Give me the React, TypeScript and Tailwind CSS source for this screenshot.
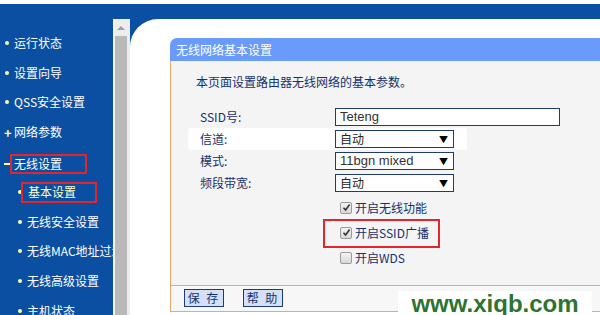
import React from "react";

const BLUE = "#0b4fa3";

const Bullet: React.FC<{ kind?: "dot" | "plus" | "minus" }> = ({ kind = "dot" }) => {
  if (kind === "plus") return <span className="shrink-0 w-[10px] text-[#ffff99] text-[13px] font-bold leading-none">+</span>;
  if (kind === "minus") return <span className="shrink-0 inline-block w-[6px] h-[2px] bg-[#ffff99] mr-[3px]" />;
  return <span className="shrink-0 inline-block w-[4px] h-[4px] rounded-full bg-[#ffffaa] mr-[5px]" />;
};

const Checkbox: React.FC<{ checked?: boolean }> = ({ checked }) => (
  <span className="w-[12px] h-[12px] rounded-[2px] border border-[#9a9a9a] bg-gradient-to-b from-[#f4f4f4] to-[#d8d8d8] flex items-center justify-center">
    {checked && (
      <svg width="9" height="9" viewBox="0 0 9 9">
        <path d="M1.5 4.8 L3.6 7 L7.6 1.6" stroke="#333" strokeWidth="1.6" fill="none" />
      </svg>
    )}
  </span>
);

const Select: React.FC<{ value: string; latin?: boolean }> = ({ value, latin }) => (
  <div className="w-[119px] h-[18px] border border-[#1f3a78] bg-white flex items-center justify-between pl-[4px] pr-[5px]">
    <span className={latin ? "text-[13px] text-[#333] font-['Liberation_Sans',sans-serif]" : "text-[12px] text-[#222]"}>{value}</span>
    <span className="text-[9px] text-black leading-none">▼</span>
  </div>
);

const App: React.FC = () => {
  return (
    <div className="w-[600px] h-[315px] overflow-hidden bg-white pt-[4px] relative font-['Noto_Sans_CJK_SC',sans-serif]">
      <div className="h-[15px]" style={{ background: BLUE }} />
      <div className="flex h-[296px]">
        {/* Sidebar */}
        <div className="w-[113px] shrink-0 bg-[#0b4fa3] pt-[9px] text-white text-[12px] overflow-hidden whitespace-nowrap">
          {["运行状态", "设置向导", "QSS安全设置"].map((t) => (
            <div key={t} className="h-[29.8px] flex items-center pl-[5px]">
              <Bullet />
              {t}
            </div>
          ))}
          <div className="h-[29.8px] flex items-center pl-[4px]">
            <Bullet kind="plus" />
            网络参数
          </div>
          <div className="h-[29.8px] flex items-center pl-[4px] pt-[3px]">
            <Bullet kind="minus" />
            <span className="inline-flex items-center h-[20px] border-2 border-[#e3262e] pl-[2px] pr-[23px] -ml-[3px]">无线设置</span>
          </div>
          <div className="h-[29.8px] flex items-center pl-[18px] pt-[1px]">
            <span className="shrink-0 inline-block w-[4px] h-[4px] rounded-full bg-[#ffffaa] mr-[-1px]" />
            <span className="inline-flex items-center h-[21px] border-2 border-[#e3262e] pl-[5px] pr-[19px] text-[#ffffcc]">基本设置</span>
          </div>
          {["无线安全设置", "无线MAC地址过滤", "无线高级设置", "主机状态"].map((t) => (
            <div key={t} className="h-[29.8px] flex items-center pl-[18px]">
              <Bullet />
              {t}
            </div>
          ))}
        </div>

        {/* Scrollbar */}
        <div className="w-[17px] shrink-0 flex bg-[#ececec]">
          <div className="w-[2px] bg-[#f4f4f4]" />
          <div className="w-[12px] flex flex-col">
            <div className="h-[17px] bg-[#ededed] flex items-center justify-center">
              <span className="w-0 h-0 border-l-[4px] border-r-[4px] border-b-[4px] border-l-transparent border-r-transparent border-b-[#a0a0a0]" />
            </div>
            <div className="flex-1 bg-[#b9b9b9]" />
          </div>
          <div className="w-[3px] bg-[#ececec]" />
        </div>

        {/* Main */}
        <div className="flex-1 bg-[#0b4fa3] overflow-hidden">
          <div className="h-full bg-white rounded-tl-[28px] pl-[40px] pt-[19px]">
            <div className="w-[460px]">
              <div className="h-[23px] bg-[#6a9bfb] rounded-tl-[7px] text-white text-[12px] flex items-center pl-[6px]">
                无线网络基本设置
              </div>
              <div className="h-[225px] bg-[#f4f4f4] border-l border-b border-[#efa764] pl-[25px] text-[#15306e] text-[12px] relative">
                <div className="pt-[13px] leading-[16px]">本页面设置路由器无线网络的基本参数。</div>
                <div className="mt-[16px] ml-[4px]">
                  <div className="h-[22px] flex items-center">
                    <span className="w-[135px]">SSID号:</span>
                    <div className="w-[225px] h-[18px] border border-[#1f3a78] bg-white flex items-center pl-[4px] text-[13px] text-[#333] font-['Liberation_Sans',sans-serif]">
                      Teteng
                    </div>
                  </div>
                  <div className="h-[22px] flex items-center bg-white -ml-[12px] pl-[12px] w-[279px] rounded-[3px]">
                    <span className="w-[135px]">信道:</span>
                    <Select value="自动" />
                  </div>
                  <div className="h-[22px] flex items-center">
                    <span className="w-[135px]">模式:</span>
                    <Select value="11bgn mixed" latin />
                  </div>
                  <div className="h-[22px] flex items-center">
                    <span className="w-[135px]">频段带宽:</span>
                    <Select value="自动" />
                  </div>
                </div>
                <div className="ml-[144px] mt-[1px]">
                  <div className="h-[25px] flex items-center gap-[3px]">
                    <Checkbox checked />
                    开启无线功能
                  </div>
                  <div className="h-[25px] flex items-center gap-[3px] relative">
                    <Checkbox checked />
                    开启SSID广播
                    <div className="absolute -left-[17px] -top-[1.5px] w-[117px] h-[29px] border-2 border-[#e3262e]" />
                  </div>
                  <div className="h-[25px] flex items-center gap-[3px]">
                    <Checkbox />
                    开启WDS
                  </div>
                </div>
              </div>
              <div className="h-[26px] bg-[#f7f7f7] border-l border-b border-[#efa764] flex items-start pt-[3px] pl-[13px] gap-[19px]">
                {["保 存", "帮 助"].map((b) => (
                  <div
                    key={b}
                    className="w-[40px] h-[18px] border border-[#1f3a78] bg-[#d4e0f7] text-[#15306e] text-[12px] flex items-center justify-center tracking-[2px]"
                  >
                    {b}
                  </div>
                ))}
              </div>
            </div>
          </div>
        </div>
      </div>

      {/* Watermark */}
      <div className="absolute left-[398px] top-[291px] w-[194px] h-[24px] bg-white flex items-center justify-center">
        <span className="text-[24px] font-bold text-[#2e7430] leading-none font-['Liberation_Sans',sans-serif] mt-[2px]">
          www.xiqb.com
        </span>
      </div>
    </div>
  );
};

export default App;
